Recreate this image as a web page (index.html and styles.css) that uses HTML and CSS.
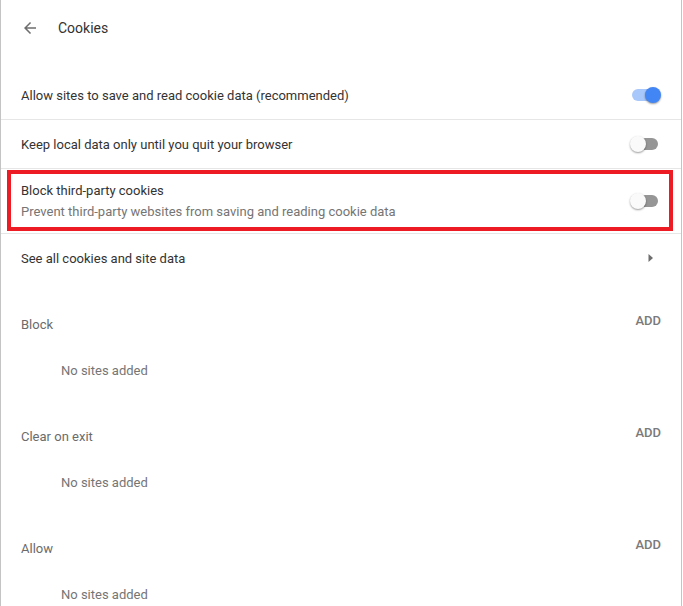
FILE: index.html
```html
<!DOCTYPE html>
<html>
<head>
<meta charset="utf-8">
<link rel="stylesheet" href="styles.css">
</head>
<body>
<div class="page">
  <div class="header">
    <svg class="back" width="16" height="16" viewBox="0 0 16 16"><path d="M14 7.25H4.9l4.2-4.2L8 2 2 8l6 6 1.05-1.05-4.15-4.2H14z" fill="#6e6e6e"/></svg>
    <span class="title">Cookies</span>
  </div>
  <div class="row">
    <span class="label">Allow sites to save and read cookie data (recommended)</span>
    <span class="toggle on"><span class="bar"></span><span class="knob"></span></span>
  </div>
  <div class="row sep">
    <span class="label">Keep local data only until you quit your browser</span>
    <span class="toggle"><span class="bar"></span><span class="knob"></span></span>
  </div>
  <div class="row sep tall highlight">
    <div class="texts">
      <span class="label">Block third-party cookies</span>
      <span class="sub">Prevent third-party websites from saving and reading cookie data</span>
    </div>
    <span class="toggle"><span class="bar"></span><span class="knob"></span></span>
  </div>
  <div class="row sep">
    <span class="label">See all cookies and site data</span>
    <svg class="arrow" width="6" height="10" viewBox="0 0 6 10"><path d="M0.5 1L5 5 0.5 9z" fill="#6e6e6e"/></svg>
  </div>
  <div class="section first">
    <div class="sec-head"><span class="sec-title">Block</span><span class="add">ADD</span></div>
    <div class="empty">No sites added</div>
  </div>
  <div class="section">
    <div class="sec-head"><span class="sec-title">Clear on exit</span><span class="add">ADD</span></div>
    <div class="empty">No sites added</div>
  </div>
  <div class="section">
    <div class="sec-head"><span class="sec-title">Allow</span><span class="add">ADD</span></div>
    <div class="empty">No sites added</div>
  </div>
</div>
</body>
</html>
```
FILE: styles.css
```css
html, body {
  margin: 0;
  padding: 0;
  background: #ffffff;
}
body {
  font-family: Roboto, "Liberation Sans", Arial, sans-serif;
  font-size: 13px;
  color: #333333;
  overflow: hidden;
}
.page {
  width: 680px;
  height: 606px;
  border-left: 1px solid #c4c4c4;
  border-right: 1px solid #c4c4c4;
  box-sizing: content-box;
}
.header {
  height: 56px;
  display: flex;
  align-items: center;
  padding-left: 21px;
  margin-bottom: 15px;
}
.back {
  display: block;
}
.title {
  margin-left: 20px;
  font-size: 14px;
  color: #333333;
}
.row {
  height: 48px;
  display: flex;
  align-items: center;
  justify-content: space-between;
  padding: 0 20px;
  box-sizing: border-box;
  position: relative;
}
.row.sep {
  border-top: 1px solid #e6e6e6;
  height: 49px;
}
.row.tall {
  height: 65px;
}
.texts {
  display: flex;
  flex-direction: column;
  gap: 4px;
}
.label {
  line-height: 17px;
}
.sub {
  color: #757575;
  line-height: 17px;
}
.highlight::after {
  content: "";
  position: absolute;
  left: 6px;
  right: 8px;
  top: 1px;
  bottom: 2px;
  border: 4px solid #ed1c24;
  pointer-events: none;
}
.toggle {
  position: relative;
  width: 31px;
  height: 16px;
  flex: none;
}
.toggle .bar {
  position: absolute;
  left: 2px;
  top: 2px;
  width: 26px;
  height: 12px;
  border-radius: 6px;
  background: #969696;
}
.toggle .knob {
  position: absolute;
  left: 0;
  top: 0;
  width: 16px;
  height: 16px;
  border-radius: 50%;
  background: #fafafa;
  box-shadow: 0 1px 2px rgba(0,0,0,0.4);
}
.toggle.on .bar {
  background: #a8c7fa;
}
.toggle.on .knob {
  left: 15px;
  background: #4285f4;
}
.arrow {
  display: block;
  margin-right: 7px;
}
.section {
  padding-top: 30px;
}
.section.first {
  padding-top: 31px;
}
.sec-head {
  display: flex;
  justify-content: space-between;
  align-items: flex-start;
  height: 24px;
  padding: 0 20px;
}
.sec-title {
  line-height: 24px;
  color: #6b6b6b;
}
.add {
  line-height: 16px;
  font-size: 13px;
  font-weight: 500;
  color: #7a7a7a;
}
.empty {
  margin-top: 10px;
  height: 48px;
  line-height: 48px;
  padding-left: 60px;
  color: #757575;
}
```
